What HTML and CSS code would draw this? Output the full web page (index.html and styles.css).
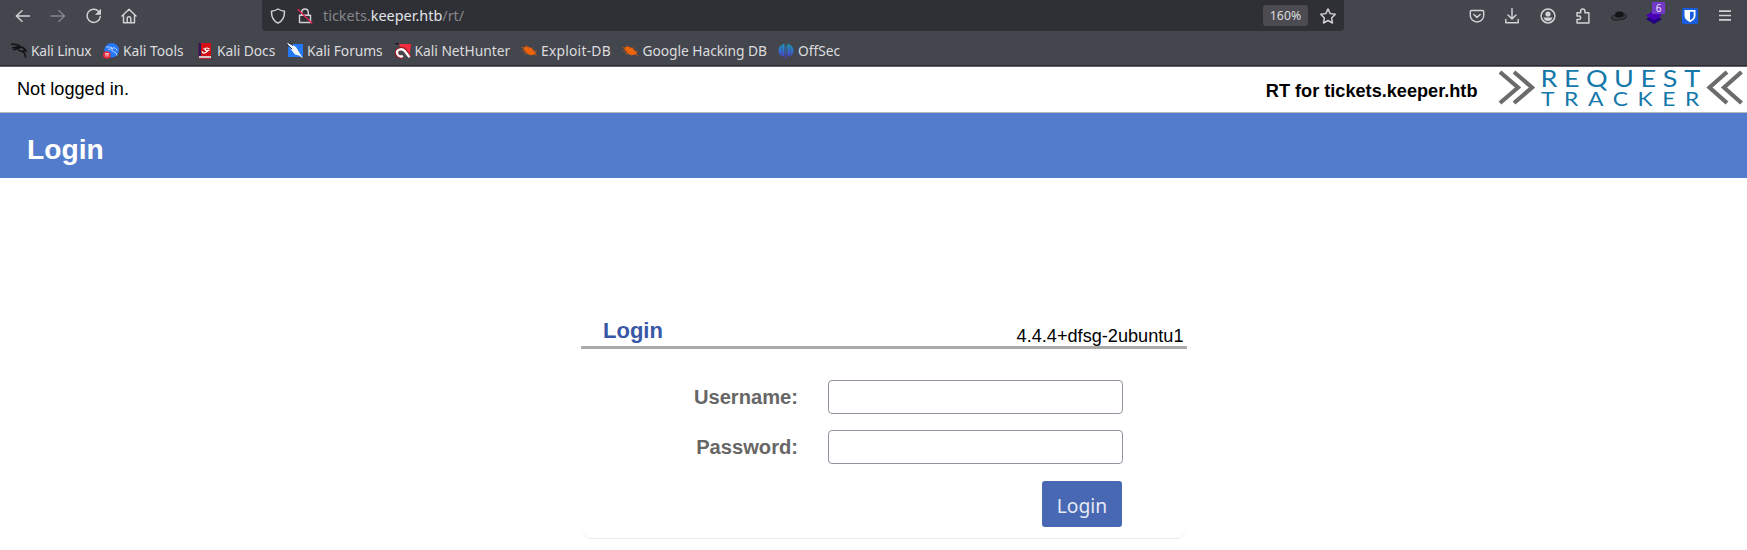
FILE: index.html
```html
<!DOCTYPE html>
<html lang="en">
<head>
<meta charset="utf-8">
<title>Login</title>
<link rel="stylesheet" href="styles.css">
</head>
<body>
<header class="chrome">
  <div class="toolbar">
    <div class="nav">
      <svg class="ico" viewBox="0 0 16 16"><path d="M14.500 8H1.300M7 2.800 1.300 8 7 13.200"/></svg>
      <svg class="ico dim" viewBox="0 0 16 16"><path d="M1 8h13.500M9 2.800 14.500 8 9 13.200"/></svg>
      <svg class="ico" viewBox="0 0 16 16"><path d="M14.300 8.500A6.600 6.600 0 1 1 12.500 3.200"/><path class="solid" d="M15 .8v6H9z"/></svg>
      <svg class="ico" viewBox="0 0 16 16"><path d="M1 8 8 1.300 15 8M2.500 7v7.800h11V7M6.200 14.500V10q0-1.300 1.800-1.300T9.800 10v4.500"/></svg>
    </div>
    <div class="urlbar">
      <svg class="ico" viewBox="0 0 16 16"><path d="M8 1C6 2.200 3.700 3 1.500 3.200 1.300 9 3 12.700 8 15.200c5-2.500 6.700-6.200 6.500-12C12.300 3 10 2.200 8 1z"/></svg>
      <svg class="ico lock" viewBox="0 0 16 16"><path d="M4.700 7V4.300a3.300 3.300 0 0 1 6.600 0V7M2.500 7.300h11v7.200h-11z"/><path class="slash" d="M1 1.500 14.800 15"/></svg>
      <span class="url">tickets.<b>keeper.htb</b>/rt/</span>
      <span class="zoom">160%</span>
      <svg class="ico" viewBox="0 0 16 16"><path d="m8 .9 2.200 4.700 5.100.7-3.700 3.600.9 5.100L8 12.500 3.500 15l.9-5.100L.7 6.300l5.100-.7z"/></svg>
    </div>
    <div class="tools">
      <svg class="ico" viewBox="0 0 16 16"><path d="M2.500 2.500h11q1.200 0 1.200 1.200V7.500a6.700 6.500 0 0 1-13.400 0V3.700q0-1.200 1.200-1.200zM4.800 6.500 8 9.400l3.200-2.900"/></svg>
      <svg class="ico down" viewBox="0 0 16 16"><path d="M8 .5v10.300M4 7l4 4 4-4M1.800 11.500v3.200h12.400v-3.200"/></svg>
      <svg class="ico" viewBox="0 0 16 16"><circle cx="8" cy="8" r="6.900"/><circle class="solid" cx="8" cy="6" r="2.600"/><path class="solid" d="M3.500 9.500h9q-1 3.500-4.500 3.500t-4.500-3.500z"/></svg>
      <svg class="ico" viewBox="0 0 16 16"><path d="M2 4.800h3.700V3a2.100 2.100 0 0 1 4.200 0v1.800h4v10.100H2v-3.500h2a1.700 1.700 0 0 0 0-3.400H2z"/></svg>
      <svg class="ico" viewBox="0 0 16 16"><ellipse cx="8" cy="9" rx="7.400" ry="2.900" fill="#3a3c42" stroke="#1b1c20" stroke-width="1" transform="rotate(-8 8 9)"/><path d="M4 8.700 4.600 4.500q3.600-2 7.400-.4l.8 4.200q-4.400 2.400-8.800.4z" fill="#141518" stroke="none"/></svg>
      <div class="ext">
        <svg class="ico" viewBox="0 0 16 16"><path d="M8 6.500 16 11l-8 5-8-5z" fill="#200080" stroke="none"/><path d="M8 2.500 16 7.500l-8 5-8-5z" fill="#4a00b4" stroke="none"/></svg>
        <span class="badge">6</span>
      </div>
      <svg class="ico" viewBox="0 0 16 16"><rect width="16" height="16" rx="1.800" fill="#175ddc" stroke="none"/><path d="M2.500 2h11v5.800q0 3.700-5.500 6.400-5.500-2.700-5.500-6.400z" fill="#fff" stroke="none"/><path d="M8 3.700h3.700v4.200q0 2.300-3.700 4.400z" fill="#175ddc" stroke="none"/></svg>
      <svg class="ico menu" viewBox="0 0 16 16"><path d="M2 3.200h12M2 7.500h12M2 11.800h12"/></svg>
    </div>
  </div>
  <nav class="bookmarks">
    <a class="mark linux"><svg class="fav" viewBox="0 0 16 16"><path d="M0 1.200C4 1 9 1.500 10 4.500 6 4.500 6 7 9.500 8c3.500.5 5 2.500 5 6.500M1 5l7-1.500M2.500 7 7 5M9 4q4 0 6 4l-3-.8" fill="none" stroke="#101114" stroke-width="1.500"/></svg>Kali Linux</a>
    <a class="mark tools-link"><svg class="fav" viewBox="0 0 16 16"><circle cx="8.700" cy="7.300" r="7.300" fill="#2777ff"/><path d="M3 4q6-.5 7 2-3 1.500.5 2.500 3 .5 3.500 4M5 6.500l4-1M10 4.500q3 .5 4.500 3" fill="none" stroke="#b9d5ff" stroke-width="1"/><circle cx="3.800" cy="12" r="3.800" fill="#e72735"/><path d="M2 10.700h4M3 10.700v3M5 10.700v3" stroke="#fff" stroke-width=".8"/></svg>Kali Tools</a>
    <a class="mark docs"><svg class="fav" viewBox="0 0 16 16"><path d="M1.500 0H14v13H1.500z" fill="#d30f16"/><path d="M1.500 0H4v13H1.500z" fill="#241c5b"/><path d="M2 13h12v2.500H2z" fill="#d5c4c8"/><path d="M2 15.200h12v.8H2z" fill="#d30f16"/><path d="M12.500 6Q9 4 8.500 6t1.500 1.500-1 1.700-4-1M6.500 5.500l2.500 1.500M10 8l2.500-1" fill="none" stroke="#fff" stroke-width="1.200"/></svg>Kali Docs</a>
    <a class="mark forums"><svg class="fav" viewBox="0 0 16 16"><path d="M1 1h15v13H1z" fill="#2378f5"/><path d="M0 0 4 1l5 3 3 5 4 6.500-4-3-4-1-4-5z" fill="#f2f6fa"/><path d="M0 1.500 5 6M2 0l4 2.500" fill="none" stroke="#101c33" stroke-width="1"/></svg>Kali Forums</a>
    <a class="mark hunter"><svg class="fav" viewBox="0 0 16 16"><path d="M3 1h13l-1.500 13z" fill="#f02c3d"/><path d="M0 0 4 1.500" stroke="#111" stroke-width="1.300"/><path d="M8 13.500C4 15 .8 12 1.800 8.800S8.500 4.500 10.500 8l4.500 6" fill="none" stroke="#9c1824" stroke-width="3.600"/><path d="M8 13C4.500 14.500 1.500 12 2 9S8 5 10 8.300l4.500 6" fill="none" stroke="#fff" stroke-width="2.300"/></svg>Kali NetHunter</a>
    <a class="mark exploit"><svg class="fav" viewBox="0 0 16 16"><path d="M2 5q3-3 8 0l4.500 4q1 3-3.500 3-5 0-7-3.500z" fill="#f3640b"/><path d="M0 4l4 2M.5 8H6M3 11l5-2M5 2l3 4M11 4l1 4M12 9l4-1M12 11l4 1.500M9 11l1 2.500" stroke="#b9561b" stroke-width=".8"/></svg>Exploit-DB</a>
    <a class="mark google"><svg class="fav" viewBox="0 0 16 16"><path d="M2 5q3-3 8 0l4.500 4q1 3-3.500 3-5 0-7-3.500z" fill="#f3640b"/><path d="M0 4l4 2M.5 8H6M3 11l5-2M5 2l3 4M11 4l1 4M12 9l4-1M12 11l4 1.500M9 11l1 2.500" stroke="#b9561b" stroke-width=".8"/></svg>Google Hacking DB</a>
    <a class="mark offsec"><svg class="fav" viewBox="0 0 16 16"><defs><linearGradient id="off" x2="0" y2="1"><stop stop-color="#12a3c4"/><stop offset="1" stop-color="#5534dc"/></linearGradient></defs><path d="M6.500.7v11.500L4.200 14V1.700Q5.500.8 6.500.7zM9.500.7v11.500l2.300 1.800V1.700Q10.500.8 9.500.7zM3.600 2v11Q.5 11 .5 7.500T3.600 2zM12.400 2v11q3.100-2 3.100-5.500T12.400 2zM7.500 3h1v13h-1z" fill="url(#off)"/></svg>OffSec</a>
  </nav>
</header>
<div class="site-head">
  <span class="status">Not logged in.</span>
  <div class="brand">
    <strong>RT for tickets.keeper.htb</strong>
    <svg class="logo" width="246" height="45" viewBox="1498 67 246 45">
      <g fill="none" stroke="#6b6b6b" stroke-width="4.200"><path d="m1500 72 18 15.500-18 15.500M1514 72l18 15.500-18 15.500M1727 72l-17.500 15.500L1727 103M1741.500 72 1724 87.500l17.500 15.500"/></g>
      <g class="wordmark"><text transform="translate(1540.500 87.200) scale(1.200 1)" font-size="22.500" textLength="133" lengthAdjust="spacing">REQUEST</text><text transform="translate(1541 105.500) scale(1.200 1)" font-size="19" textLength="132" lengthAdjust="spacing">TRACKER</text></g>
    </svg>
  </div>
</div>
<h1 class="page-title">Login</h1>
<main class="card">
  <div class="card-head"><h2>Login</h2><span>4.4.4+dfsg-2ubuntu1</span></div>
  <form class="form">
    <label for="user">Username:</label><input id="user" type="text">
    <label for="pass">Password:</label><input id="pass" type="password">
    <button type="button">Login</button>
  </form>
</main>
</body>
</html>
```
FILE: styles.css
```css
* { box-sizing: border-box; }
body { margin: 0; height: 550px; overflow: hidden; background: #fff; color: #000; font: 18.150px/22px "Liberation Sans", Arial, sans-serif; }
svg { display: block; flex: none; }
.chrome { height: 67px; background: #44464e; border-bottom: 1px solid #68636b; box-shadow: inset 0 -1px #2d2c33; font-family: "Noto Sans", sans-serif; color: #dcdcdf; }
.toolbar { height: 31px; display: flex; }
.nav { width: 262px; padding-left: 15px; display: flex; align-items: center; gap: 19.400px; }
.ico { width: 16px; height: 16px; fill: none; stroke: #d2d2d6; stroke-width: 1.450; stroke-linejoin: round; stroke-linecap: round; }
.solid { fill: #d2d2d6; stroke: none; }
.dim { opacity: .45; }
.slash { stroke: #e22850; }
.urlbar { width: 1082px; background: #2f3035; border-radius: 0 0 4px 4px; display: flex; align-items: center; padding: 0 8px; }
.lock { margin-left: 11px; }
.url { margin-left: 10px; padding-top: 1px; font-size: 14.450px; color: #85858b; white-space: nowrap; }
.url b { font-weight: 400; color: #e4e4e7; }
.zoom { margin-left: auto; margin-right: 12px; width: 45px; height: 21px; border-radius: 3px; background: #4b4b51; text-align: center; font-size: 12.300px; line-height: 21px; }
.tools { margin-left: auto; padding-right: 14px; display: flex; align-items: center; gap: 19.500px; }
.down { margin-left: -.5px; margin-right: .5px; }
.ext { position: relative; }
.badge { position: absolute; left: 6px; top: -6px; width: 13px; height: 12px; border-radius: 1px; background: #7139c5; color: #f1e8ff; font-size: 10px; line-height: 12px; text-align: center; }
.menu { stroke-linecap: butt; stroke-width: 1.700; }
.bookmarks { height: 35px; padding: 4px 0 0 11px; display: flex; align-items: center; }
.mark { display: flex; align-items: center; gap: 4px; font-size: 13.800px; line-height: 20px; white-space: nowrap; }
.fav { width: 16px; height: 16px; }
.linux { width: 92px; letter-spacing: -.17px; }
.tools-link { width: 94px; }
.docs { width: 90px; letter-spacing: -.05px; }
.forums { width: 107.500px; letter-spacing: -.05px; }
.hunter { width: 126px; letter-spacing: -.02px; }
.exploit, .google { gap: 4.500px; }
.exploit { width: 101.500px; letter-spacing: .25px; }
.google { width: 156px; letter-spacing: -.05px; }
.site-head { height: 46px; border-bottom: 1px solid #b5bcc0; padding: 0 3px 0 17px; display: flex; justify-content: space-between; align-items: center; }
.status { padding-bottom: 1px; }
.brand { display: flex; align-items: center; gap: 20.500px; }
.brand strong { padding-top: 3px; }
.logo { overflow: visible; }
.wordmark { fill: #1478aa; font-family: Lato, sans-serif; }
.page-title { margin: 0; height: 65px; padding: 19px 0 0 27px; background: #537dcc; color: #fff; font-size: 28.200px; line-height: 34px; }
.card { width: 606px; height: 222px; margin: 139px 0 0 581px; border-bottom: 1px solid #ececec; border-radius: 0 0 12px 12px; }
.card-head { height: 32px; border-bottom: 3px solid #aaa; padding: 0 3.500px 0 22px; display: flex; justify-content: space-between; }
.card-head h2 { margin: 0; font-size: 22px; line-height: 27px; color: #3858a6; }
.card-head span { padding-top: 8px; }
.form { padding: 31px 64px 0 0; display: grid; grid-template-columns: 217px 295px; grid-template-rows: 34px 34px 46px; justify-content: end; column-gap: 30px; row-gap: 16px; }
.form label { font-size: 20.150px; line-height: 35px; font-weight: 700; color: #666; text-align: right; }
.form input { width: 295px; height: 34px; border: 1px solid #93929f; border-radius: 4px; background: #fff; }
.form button { grid-column: 2; justify-self: end; width: 80px; height: 46px; margin: 1px 1px 0 0; padding: 2px 0 0; border: 0; border-radius: 3px; background: #4868b3; color: #e6e9f5; font: 19.300px "Noto Sans", sans-serif; }
```
